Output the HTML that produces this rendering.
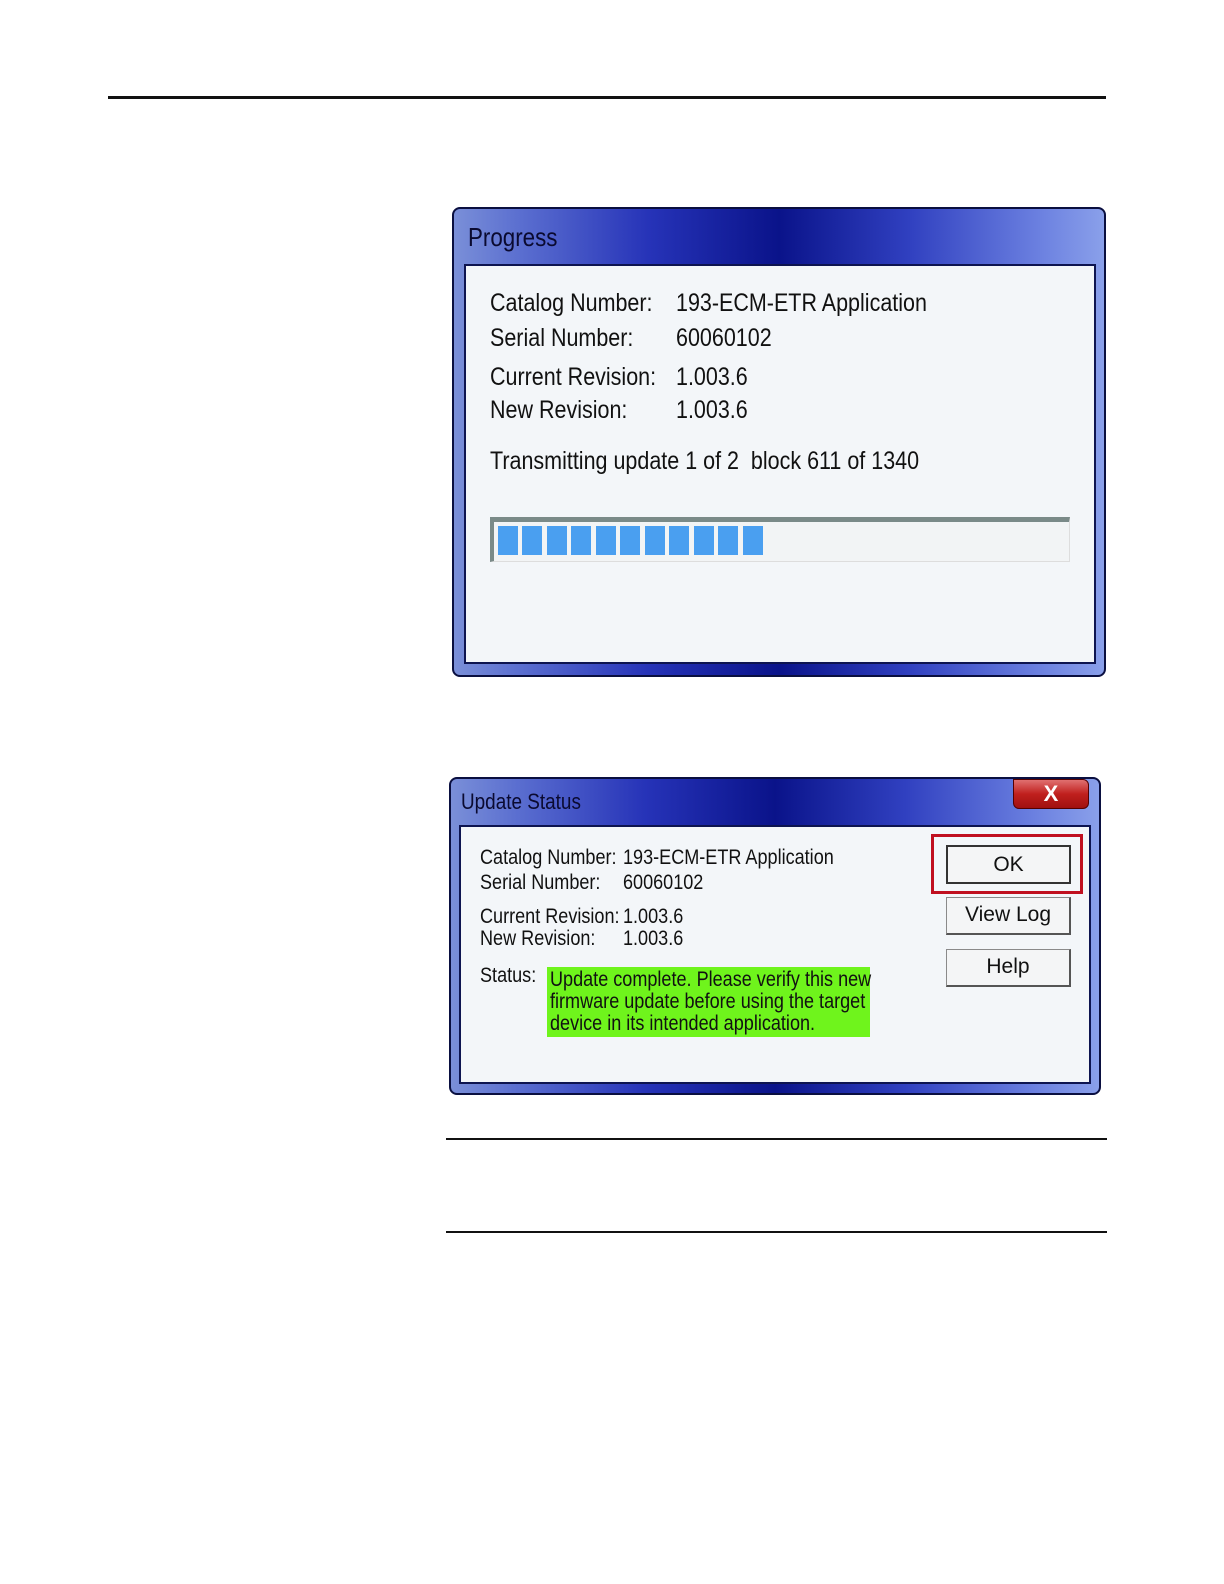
<!DOCTYPE html>
<html><head><meta charset="utf-8"><style>
body{margin:0;width:1224px;height:1584px;background:#fff;position:relative;overflow:hidden;font-family:"Liberation Sans",sans-serif;}
.a{position:absolute;}
.t{position:absolute;white-space:nowrap;transform:scaleX(.86);transform-origin:0 0;color:#111;}
.win{position:absolute;border-radius:8px;background:linear-gradient(90deg,#7a8fd8 0%,#5b6fd0 10%,#2633b8 30%,#0a138a 50%,#3040c0 70%,#6b80e0 90%,#8aa0ea 100%);border:2px solid #0a0f40;box-sizing:border-box;}
.panel{position:absolute;background:#f3f6f9;border:2px solid #0d1450;box-sizing:border-box;}
.btn{position:absolute;background:#f4f5f6;border:1px solid #8a8a8a;border-right:2px solid #555;border-bottom:2px solid #555;box-sizing:border-box;font-size:21px;text-align:center;color:#111;}
.blk{position:absolute;top:526px;width:20px;height:29px;background:#4a9ff0;}
</style></head><body>
<div class="a" style="left:108px;top:96px;width:998px;height:3px;background:#111"></div>

<div class="win" style="left:452px;top:207px;width:654px;height:470px"></div>
<div class="t" style="left:468px;top:222px;font-size:26px;color:#0a0a30">Progress</div>
<div class="panel" style="left:464px;top:264px;width:632px;height:400px"></div>
<div class="t" style="left:490px;top:289px;font-size:25px">Catalog Number:</div>
<div class="t" style="left:676px;top:289px;font-size:25px">193-ECM-ETR Application</div>
<div class="t" style="left:490px;top:324px;font-size:25px">Serial Number:</div>
<div class="t" style="left:676px;top:324px;font-size:25px">60060102</div>
<div class="t" style="left:490px;top:363px;font-size:25px">Current Revision:</div>
<div class="t" style="left:676px;top:363px;font-size:25px">1.003.6</div>
<div class="t" style="left:490px;top:396px;font-size:25px">New Revision:</div>
<div class="t" style="left:676px;top:396px;font-size:25px">1.003.6</div>
<div class="t" style="left:490px;top:447px;font-size:25px">Transmitting update 1 of 2&nbsp; block 611 of 1340</div>
<div class="a" style="left:490px;top:517px;width:580px;height:45px;background:#f2f4f5;border-top:5px solid #7a8a88;border-left:4px solid #7a8a88;border-right:1px solid #ddd;border-bottom:1px solid #ddd;box-sizing:border-box"></div>
<div class="blk" style="left:498px"></div><div class="blk" style="left:522px"></div><div class="blk" style="left:547px"></div><div class="blk" style="left:571px"></div><div class="blk" style="left:596px"></div><div class="blk" style="left:620px"></div><div class="blk" style="left:645px"></div><div class="blk" style="left:669px"></div><div class="blk" style="left:694px"></div><div class="blk" style="left:718px"></div><div class="blk" style="left:743px"></div>

<div class="win" style="left:449px;top:777px;width:652px;height:318px"></div>
<div class="a" style="left:1013px;top:779px;width:76px;height:30px;border-radius:0 6px 6px 6px;background:linear-gradient(#e07070,#c0201e 50%,#a01010);border:1px solid #500;box-sizing:border-box;color:#fff;font-weight:bold;font-size:22px;text-align:center;line-height:28px">X</div>
<div class="t" style="left:461px;top:789px;font-size:22px;color:#0a0a30">Update Status</div>
<div class="panel" style="left:459px;top:825px;width:632px;height:259px"></div>
<div class="t" style="left:480px;top:846px;font-size:21px">Catalog Number:</div>
<div class="t" style="left:623px;top:846px;font-size:21px">193-ECM-ETR Application</div>
<div class="t" style="left:480px;top:871px;font-size:21px">Serial Number:</div>
<div class="t" style="left:623px;top:871px;font-size:21px">60060102</div>
<div class="t" style="left:480px;top:905px;font-size:21px">Current Revision:</div>
<div class="t" style="left:623px;top:905px;font-size:21px">1.003.6</div>
<div class="t" style="left:480px;top:927px;font-size:21px">New Revision:</div>
<div class="t" style="left:623px;top:927px;font-size:21px">1.003.6</div>
<div class="t" style="left:480px;top:964px;font-size:21px">Status:</div>
<div class="a" style="left:547px;top:967px;width:323px;height:70px;background:#6ff41c"></div>
<div class="t" style="left:550px;top:969px;font-size:21px;line-height:22px">Update complete. Please verify this new<br>firmware update before using the target<br>device in its intended application.</div>
<div class="a" style="left:931px;top:834px;width:152px;height:60px;border:3px solid #c01020;box-sizing:border-box"></div>
<div class="btn" style="left:946px;top:845px;width:125px;height:39px;line-height:36px;border:2px solid #333">OK</div>
<div class="btn" style="left:946px;top:897px;width:125px;height:38px;line-height:34px">View Log</div>
<div class="btn" style="left:946px;top:949px;width:125px;height:38px;line-height:34px">Help</div>

<div class="a" style="left:446px;top:1138px;width:661px;height:2px;background:#111"></div>
<div class="a" style="left:446px;top:1231px;width:661px;height:2px;background:#111"></div>
</body></html>
